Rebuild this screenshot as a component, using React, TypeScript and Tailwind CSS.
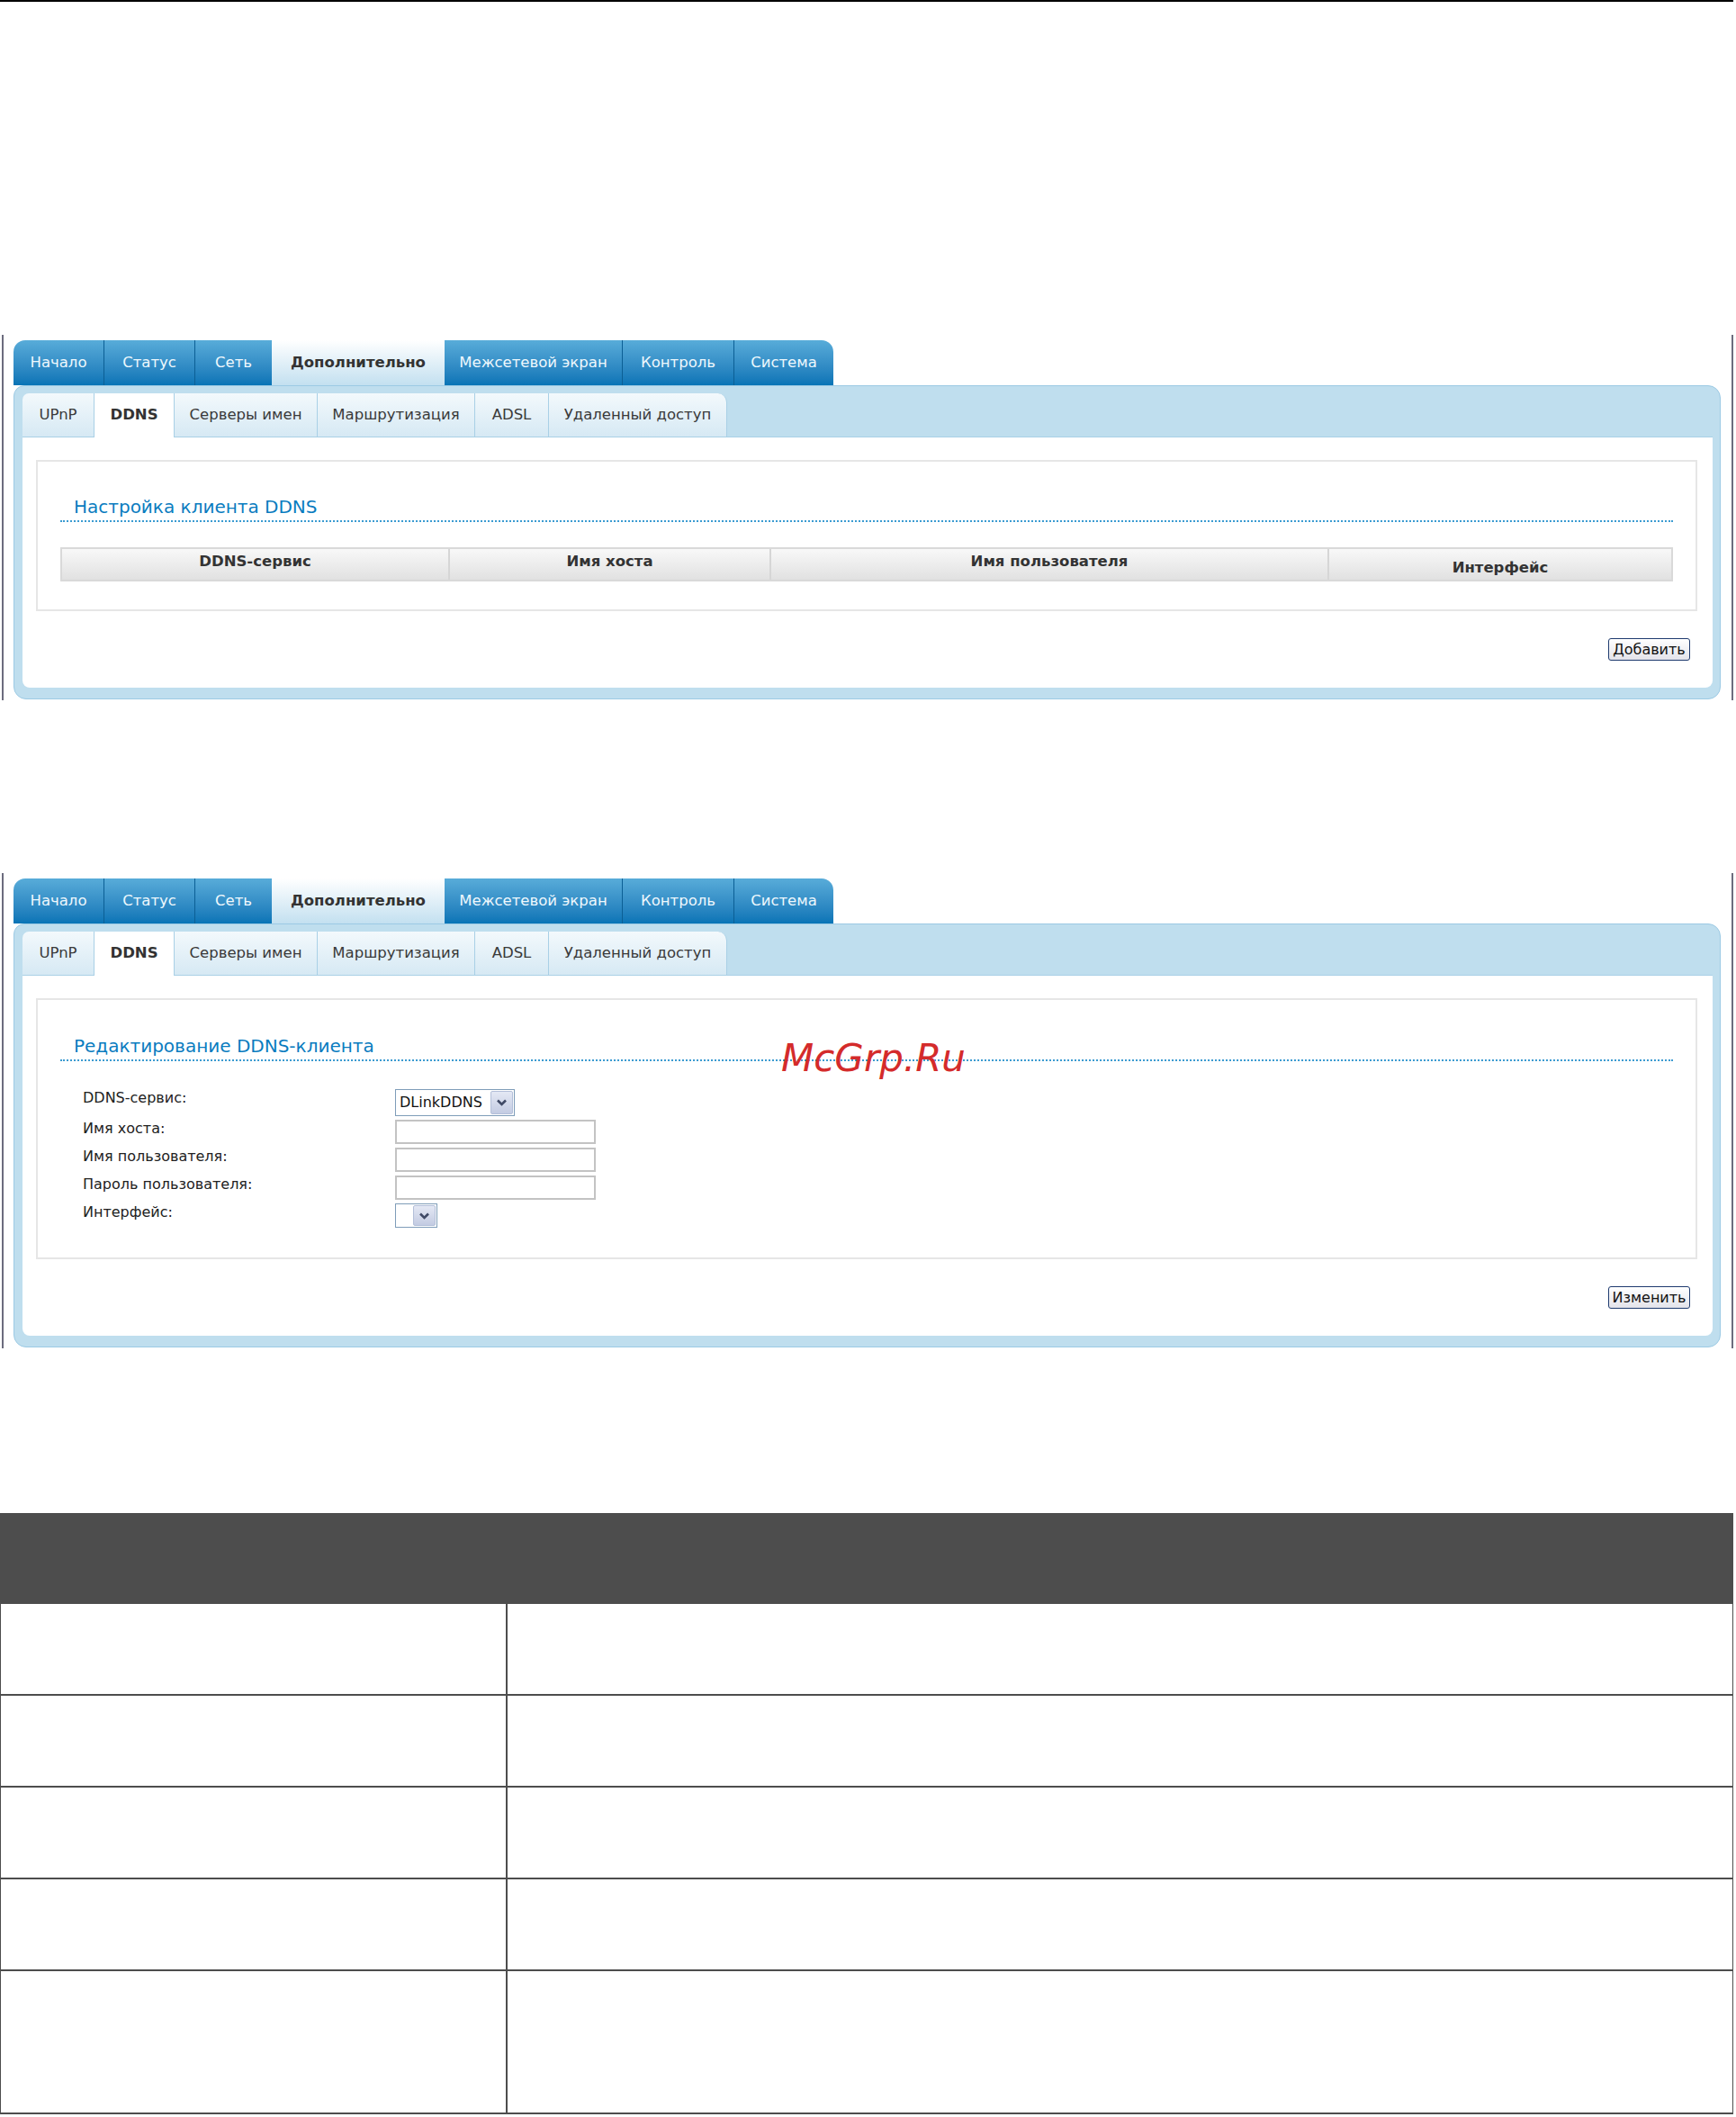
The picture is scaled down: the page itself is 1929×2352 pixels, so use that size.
import React from 'react';

type Tab = { label: string; w: string; active?: boolean };

const mainTabs: Tab[] = [
  { label: 'Начало', w: 'w-[101px]' },
  { label: 'Статус', w: 'w-[101px]' },
  { label: 'Сеть', w: 'w-[85px]' },
  { label: 'Дополнительно', w: 'w-[192px]', active: true },
  { label: 'Межсетевой экран', w: 'w-[198px]' },
  { label: 'Контроль', w: 'w-[124px]' },
  { label: 'Система', w: 'w-[110px]' },
];

const subTabs: Tab[] = [
  { label: 'UPnP', w: 'w-[80px]' },
  { label: 'DDNS', w: 'w-[89px]', active: true },
  { label: 'Серверы имен', w: 'w-[159px]' },
  { label: 'Маршрутизация', w: 'w-[175px]' },
  { label: 'ADSL', w: 'w-[82px]' },
  { label: 'Удаленный доступ', w: 'w-[198px]' },
];

function MainTabs() {
  return (
    <div className="flex h-[50px]">
      {mainTabs.map((t, i) => {
        const first = i === 0;
        const last = i === mainTabs.length - 1;
        const nextActive = mainTabs[i + 1]?.active;
        return (
          <div
            key={t.label}
            className={[
              'flex h-full items-center justify-center text-[16.5px]',
              t.w,
              first ? 'rounded-tl-[13px]' : '',
              last ? 'rounded-tr-[13px]' : '',
              t.active
                ? 'bg-linear-to-b from-[#ffffff] to-[#c3e0f0] font-bold text-[#333333]'
                : 'bg-linear-to-b from-[#58acd9] to-[#0674b6] text-[#eef8fd]',
              !t.active && !last && !nextActive ? 'border-r border-[#0b5f95]' : '',
            ].join(' ')}
          >
            {t.label}
          </div>
        );
      })}
    </div>
  );
}

function SubTabs() {
  return (
    <div className="flex h-[48px] items-stretch">
      {subTabs.map((t, i) => {
        const first = i === 0;
        const last = i === subTabs.length - 1;
        return (
          <div
            key={t.label}
            className={[
              'flex items-center justify-center text-[16.5px]',
              t.w,
              first ? 'rounded-tl-[7px]' : '',
              last ? 'rounded-tr-[10px]' : '',
              t.active
                ? 'relative z-10 -mb-px h-[49px] bg-white font-bold text-[#333333] border-r border-[#a9d0e6]'
                : 'bg-linear-to-b from-[#f3f9fc] to-[#d6e9f4] text-[#3a3a3a] border-r border-[#a9d0e6]',
            ].join(' ')}
          >
            {t.label}
          </div>
        );
      })}
    </div>
  );
}

function XpButton({ label }: { label: string }) {
  return (
    <div className="flex h-[25px] w-[91px] items-center justify-center rounded-[3px] border border-[#1f3b6f] bg-linear-to-b from-[#ffffff] to-[#e3e3ea] text-[16px] leading-none text-[#111111]">
      {label}
    </div>
  );
}

function Chevron() {
  return (
    <svg width="13" height="10" viewBox="0 0 13 10">
      <path d="M2 2.5 L6.5 7 L11 2.5" fill="none" stroke="#404a66" strokeWidth="2.6" />
    </svg>
  );
}

function XpSelect({ value, w }: { value: string; w: string }) {
  return (
    <div className={['flex h-[30px] items-stretch border border-[#7f9db9] bg-white p-[1px]', w].join(' ')}>
      <div className="flex flex-1 items-center pl-[3px] text-[16px] text-[#111111]">{value}</div>
      <div className="flex w-[25px] items-center justify-center rounded-[2px] border border-[#b3bfd9] bg-linear-to-b from-[#e4e8f4] to-[#c3cbe2]">
        <Chevron />
      </div>
    </div>
  );
}

function SmallSelect() {
  return (
    <div className="flex h-[27px] w-[47px] items-stretch border border-[#7f9db9] bg-white p-[1px]">
      <div className="flex-1" />
      <div className="flex w-[25px] items-center justify-center rounded-[2px] border border-[#b3bfd9] bg-linear-to-b from-[#e4e8f4] to-[#c3cbe2]">
        <Chevron />
      </div>
    </div>
  );
}

function TextInput() {
  return <div className="h-[27px] w-[223px] border-2 border-[#c3c3c3] bg-white" />;
}

function Title({ children }: { children: React.ReactNode }) {
  return (
    <div>
      <div className="pl-[15px] text-[20px] leading-[24px] text-[#0a7cbf]">{children}</div>
      <div className="mt-[3px] h-0 border-b-2 border-dotted border-[#3b9bd1]" />
    </div>
  );
}

function ListCard() {
  const cols = [
    { label: 'DDNS-сервис', w: 'w-[431px]', pt: 'pt-[4px]' },
    { label: 'Имя хоста', w: 'w-[357px]', pt: 'pt-[4px]' },
    { label: 'Имя пользователя', w: 'w-[620px]', pt: 'pt-[4px]' },
    { label: 'Интерфейс', w: 'flex-1', pt: 'pt-[11px]' },
  ];
  return (
    <div className="border-2 border-[#e6e6e6] px-[25px] pt-[38px] pb-[31px]">
      <Title>Настройка клиента DDNS</Title>
      <div className="mt-[28px] flex h-[38px] border-2 border-[#d9d9d9] bg-linear-to-b from-[#f8f8f8] to-[#e1e1e1]">
        {cols.map((c, i) => (
          <div
            key={c.label}
            className={[
              'flex justify-center text-[16.5px] font-bold leading-[20px] text-[#333333]',
              c.w,
              c.pt,
              i < cols.length - 1 ? 'border-r-2 border-[#d6d6d6]' : '',
            ].join(' ')}
          >
            {c.label}
          </div>
        ))}
      </div>
    </div>
  );
}

function EditCard() {
  const rows: { label: string; field: React.ReactNode }[] = [
    { label: 'DDNS-сервис:', field: <XpSelect value="DLinkDDNS" w="w-[133px]" /> },
    { label: 'Имя хоста:', field: <TextInput /> },
    { label: 'Имя пользователя:', field: <TextInput /> },
    { label: 'Пароль пользователя:', field: <TextInput /> },
    { label: 'Интерфейс:', field: <SmallSelect /> },
  ];
  return (
    <div className="border-2 border-[#e6e6e6] px-[25px] pt-[39px] pb-[33px]">
      <Title>Редактирование DDNS-клиента</Title>
      <div className="mt-[31px] flex flex-col gap-[4px] pl-[25px]">
        {rows.map((r) => (
          <div key={r.label} className="flex items-start">
            <div className="w-[347px] text-[16px] leading-[20px] text-[#222222]">{r.label}</div>
            {r.field}
          </div>
        ))}
      </div>
    </div>
  );
}

function Screenshot({ edit }: { edit?: boolean }) {
  return (
    <div className="ml-[2px] w-[1924px] border-x-2 border-[#6c6c7e] pl-[11px] pr-[12px] pt-[6px] pb-[1px]">
      <MainTabs />
      <div className="rounded-[14px] rounded-tl-[12px] border border-[#9ccae4] bg-[#bfdeee] px-[9px] pt-[8px] pb-[12px] pr-[8px]">
        <SubTabs />
        <div className="rounded-b-[8px] border-t border-[#a9d0e6] bg-white pl-[15px] pr-[17px] pt-[25px] pb-[30px]">
          {edit ? <EditCard /> : <ListCard />}
          <div className="mt-[30px] flex justify-end pr-[8px]">
            <XpButton label={edit ? 'Изменить' : 'Добавить'} />
          </div>
        </div>
      </div>
    </div>
  );
}

function DocTable() {
  const rowHeights = ['h-[102px]', 'h-[102px]', 'h-[102px]', 'h-[102px]', 'h-[159px]'];
  return (
    <div className="w-[1926px]">
      <div className="h-[101px] bg-[#4d4d4d]" />
      {rowHeights.map((h, i) => (
        <div key={i} className={['flex border-b-2 border-x border-[#4d4d4d]', h].join(' ')}>
          <div className="w-[563px] border-r-2 border-[#4d4d4d]" />
          <div className="flex-1" />
        </div>
      ))}
    </div>
  );
}

export default function App() {
  return (
    <div className="relative w-[1929px] bg-white font-['DejaVu_Sans',sans-serif]">
      <div className="h-[2px] w-[1926px] bg-black" />
      <div className="h-[370px]" />
      <Screenshot />
      <div className="h-[192px]" />
      <Screenshot edit />
      <div className="h-[183px]" />
      <DocTable />
      <div className="h-[4px]" />
      <div className="absolute left-[868px] top-[1152px] text-[42px] italic leading-[48px] text-[#d42b2b]">
        McGrp.Ru
      </div>
    </div>
  );
}
